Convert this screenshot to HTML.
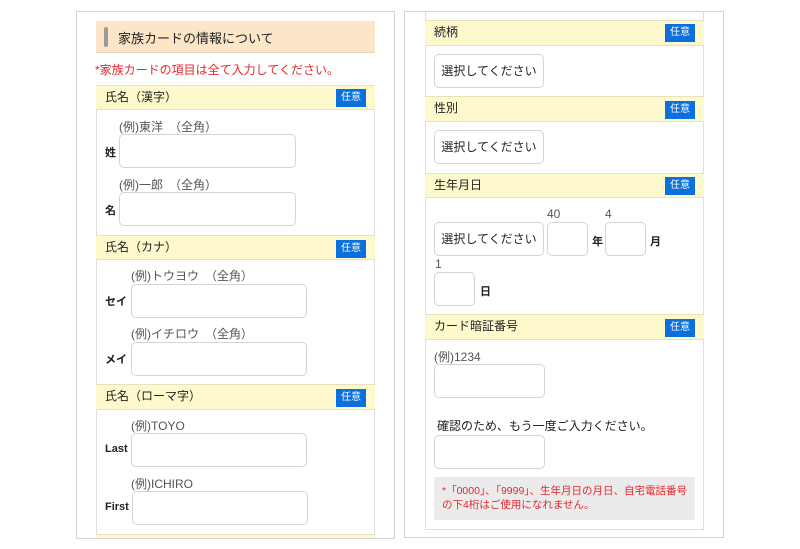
<!DOCTYPE html>
<html><head><meta charset="utf-8"><style>
*{margin:0;padding:0;box-sizing:border-box}
body{width:800px;height:549px;background:#fff;position:relative;overflow:hidden;font-family:"Liberation Sans","Noto Sans CJK JP",sans-serif;color:#222}
.a{position:absolute}
.hd{position:absolute;background:#fef9cd;border-top:1px solid #e6e2c0;border-bottom:1px solid #e6e2c0;font-size:12px;padding-left:9px;line-height:23px}
.bd{position:absolute;background:#0b6fdc;color:#fff;font-size:10px;width:30px;height:18px;line-height:18px;text-align:center}
.in{position:absolute;border:1px solid #d4d4d4;border-radius:5px;background:#fff}
.h{position:absolute;font-size:12px;color:#555}
.l{position:absolute;font-size:11px;font-weight:bold}
.sel{position:absolute;border:1px solid #d4d4d4;border-radius:5px;background:#fff;font-size:12px;text-align:center;line-height:32px;width:110px;height:34px}
</style></head><body>
<div class="a" style="left:76px;top:11px;width:319px;height:528px;border:1px solid #d2d2d2"></div>
<div class="a" style="left:96px;top:85px;width:279px;height:453px;border-left:1px solid #ddd;border-right:1px solid #ddd"></div>
<div class="a" style="left:96px;top:21px;width:279px;height:32px;background:#fde6c8;border-bottom:1px solid #ecd3b0"></div>
<div class="a" style="left:104px;top:27px;width:4px;height:20px;background:#999;border-radius:2px"></div>
<div class="a" style="left:118px;top:28px;font-size:13px">家族カードの情報について</div>
<div class="a" style="left:95px;top:61px;font-size:12px;color:#e5262c">*家族カードの項目は全て入力してください。</div>

<div class="hd" style="left:96px;top:85px;width:279px;height:25px">氏名（漢字）</div><div class="bd" style="left:336px;top:89px">任意</div>
<div class="h" style="left:119px;top:118px">(例)東洋　（全角）</div>
<div class="l" style="left:105px;top:144px">姓</div><div class="in" style="left:119px;top:134px;width:177px;height:34px"></div>
<div class="h" style="left:119px;top:176px">(例)一郎　（全角）</div>
<div class="l" style="left:105px;top:202px">名</div><div class="in" style="left:119px;top:192px;width:177px;height:34px"></div>

<div class="hd" style="left:96px;top:235px;width:279px;height:25px">氏名（カナ）</div><div class="bd" style="left:336px;top:240px">任意</div>
<div class="h" style="left:131px;top:267px">(例)トウヨウ　（全角）</div>
<div class="l" style="left:105px;top:293px">セイ</div><div class="in" style="left:131px;top:284px;width:176px;height:34px"></div>
<div class="h" style="left:131px;top:325px">(例)イチロウ　（全角）</div>
<div class="l" style="left:105px;top:351px">メイ</div><div class="in" style="left:131px;top:342px;width:176px;height:34px"></div>

<div class="hd" style="left:96px;top:384px;width:279px;height:26px">氏名（ローマ字）</div><div class="bd" style="left:336px;top:389px">任意</div>
<div class="h" style="left:131px;top:417px">(例)TOYO</div>
<div class="l" style="left:105px;top:443px">Last</div><div class="in" style="left:131px;top:433px;width:176px;height:34px"></div>
<div class="h" style="left:131px;top:475px">(例)ICHIRO</div>
<div class="l" style="left:105px;top:501px">First</div><div class="in" style="left:132px;top:491px;width:176px;height:34px"></div>
<div class="a" style="left:96px;top:534px;width:279px;height:4px;background:#fef9cd;border-top:1px solid #e6e2c0"></div>

<!-- right -->
<div class="a" style="left:404px;top:11px;width:320px;height:527px;border:1px solid #d2d2d2"></div>
<div class="a" style="left:425px;top:11px;width:279px;height:519px;border:1px solid #ddd;border-top:none"></div>

<div class="hd" style="left:425px;top:20px;width:279px;height:26px">続柄</div><div class="bd" style="left:665px;top:24px">任意</div>
<div class="sel" style="left:434px;top:54px">選択してください</div>
<div class="hd" style="left:425px;top:96px;width:279px;height:26px">性別</div><div class="bd" style="left:665px;top:101px">任意</div>
<div class="sel" style="left:434px;top:130px">選択してください</div>
<div class="hd" style="left:425px;top:173px;width:279px;height:25px">生年月日</div><div class="bd" style="left:665px;top:177px">任意</div>
<div class="h" style="left:547px;top:207px">40</div><div class="h" style="left:605px;top:207px">4</div>
<div class="sel" style="left:434px;top:222px">選択してください</div>
<div class="in" style="left:547px;top:222px;width:41px;height:34px"></div><div class="l" style="left:592px;top:233px">年</div>
<div class="in" style="left:605px;top:222px;width:41px;height:34px"></div><div class="l" style="left:650px;top:233px">月</div>
<div class="h" style="left:435px;top:257px">1</div>
<div class="in" style="left:434px;top:272px;width:41px;height:34px"></div><div class="l" style="left:480px;top:283px">日</div>

<div class="hd" style="left:425px;top:314px;width:279px;height:26px">カード暗証番号</div><div class="bd" style="left:665px;top:319px">任意</div>
<div class="h" style="left:434px;top:348px">(例)1234</div>
<div class="in" style="left:434px;top:364px;width:111px;height:34px"></div>
<div class="a" style="left:437px;top:417px;font-size:12px">確認のため、もう一度ご入力ください。</div>
<div class="in" style="left:434px;top:435px;width:111px;height:34px"></div>
<div class="a" style="left:434px;top:477px;width:261px;height:43px;background:#ebebeb;color:#e5262c;font-size:10.5px;line-height:14px;padding:7px 6px 0 8px">*「0000」、「9999」、生年月日の月日、自宅電話番号の下4桁はご使用になれません。</div>
</body></html>
